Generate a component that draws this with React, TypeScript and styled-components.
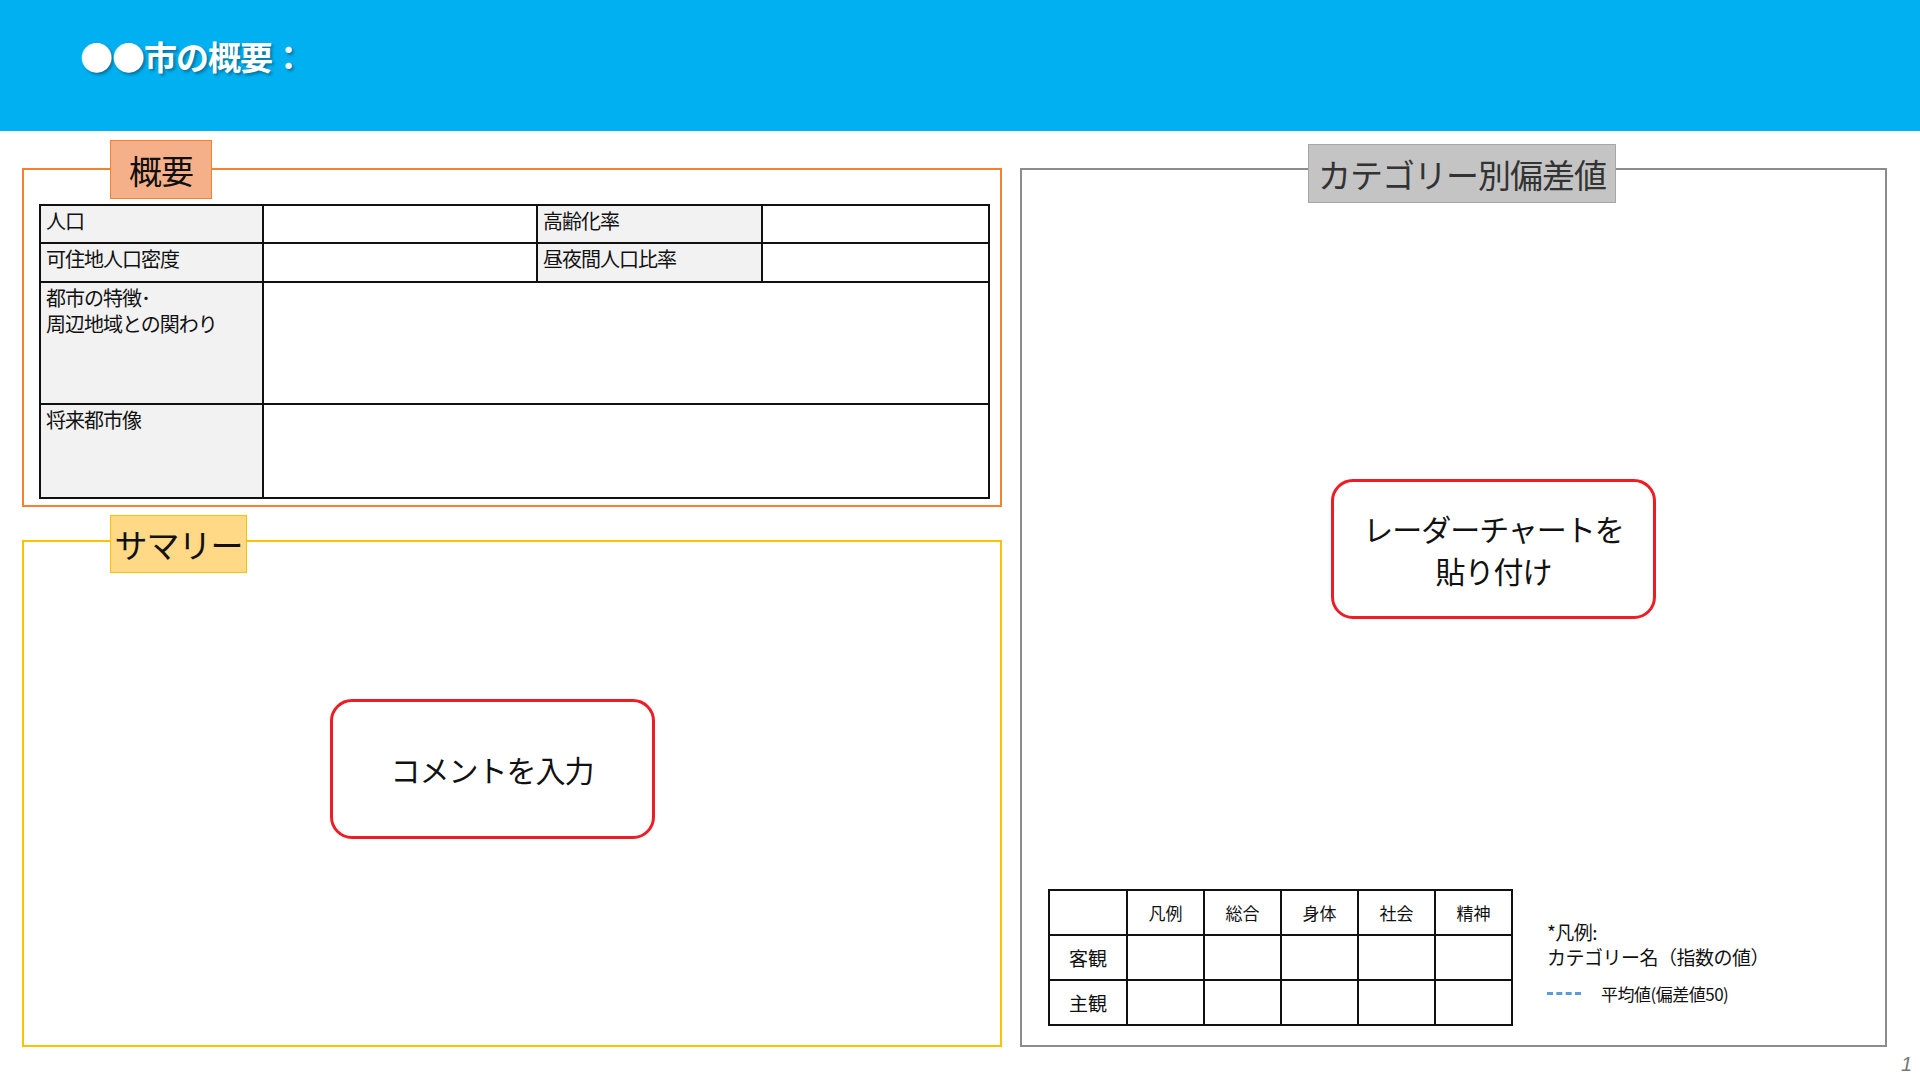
import * as React from 'react';
import styled, { createGlobalStyle } from 'styled-components';

const Global = createGlobalStyle`
  html, body { margin:0; padding:0; background:#fff; }
  body { font-family: "Noto Sans CJK JP", "Noto Sans", sans-serif; color:#111; }
`

const Page = styled.div`
  width:1920px;
  height:1080px;
  position:relative;
  overflow:hidden;
`
const Header = styled.header`
  height:131px;
  background:#00b0f0;
  display:flex;
  align-items:center;
  padding-left:80px;
  box-sizing:border-box;
`
const Title = styled.h1`
  margin:0 0 20px;
  font-size:33px;
  font-weight:700;
  color:#fff;
  letter-spacing:-1px;
  text-shadow: 2px 2px 3px rgba(0,0,0,0.35);
`
const Body = styled.main`
  display:grid;
  grid-template-columns:980px 867px;
  column-gap:18px;
  padding:37px 0 0 22px;
`
const LeftCol = styled.div`
  display:flex;
  flex-direction:column;
  gap:33px;
`
const Frame = styled.section<{ $color: string; $h: number }>`
  position:relative;
  height:${p => p.$h}px;
  border:2px solid ${p => p.$color};
  box-sizing:border-box;
`
const Tag = styled.div<{ $bg: string; $border: string; $left: number; $top: number; $w: number; $h: number; $size: number; $color?: string }>`
  position:absolute;
  left:${p => p.$left}px;
  top:${p => p.$top}px;
  width:${p => p.$w}px;
  height:${p => p.$h}px;
  background:${p => p.$bg};
  border:1px solid ${p => p.$border};
  box-sizing:border-box;
  display:flex;
  align-items:center;
  justify-content:center;
  font-size:${p => p.$size}px;
  color:${p => p.$color || '#111'};
  letter-spacing:-1px;
`
const InfoTable = styled.table`
  position:absolute;
  left:15px;
  top:34px;
  width:951px;
  border-collapse:collapse;
  font-size:20px;
  td { border:2px solid #111; padding:2px 5px; vertical-align:top; line-height:1.3; letter-spacing:-1px; }
`
const Th = styled.td`
  background:#f2f2f2;
`
const Callout = styled.div<{ $w: number; $h: number }>`
  width:${p => p.$w}px;
  height:${p => p.$h}px;
  border:3px solid #ee1c25;
  border-radius:22px;
  box-sizing:border-box;
  display:flex;
  align-items:center;
  justify-content:center;
  text-align:center;
  font-size:30px;
  line-height:1.4;
  background:#fff;
  letter-spacing:-1px;
`
const CenterArea = styled.div<{ $pt: number }>`
  display:flex;
  justify-content:center;
  padding-top:${p => p.$pt}px;
`
const BottomRow = styled.div`
  position:absolute;
  left:26px;
  top:719px;
  display:flex;
  align-items:flex-start;
  gap:34px;
`
const ScoreTable = styled.table`
  border-collapse:collapse;
  font-size:17px;
  td { border:2px solid #111; height:43px; text-align:center; padding:0; }
`
const Legend = styled.div`
  padding-top:30px;
  font-size:19px;
  line-height:25px;
  letter-spacing:-0.5px;
`
const AvgRow = styled.div`
  display:flex;
  align-items:center;
  gap:20px;
  margin-top:12px;
  font-size:17px;
`
const Dash = styled.span`
  width:34px;
  border-top:3px dashed #5b9bd5;
`
const PageNo = styled.div`
  position:absolute;
  right:8px;
  bottom:4px;
  font-size:20px;
  font-style:italic;
  color:#777;
  font-family:"Liberation Sans", sans-serif;
`

const cols = ['凡例', '総合', '身体', '社会', '精神']

export default function App() {
  return (
    <Page>
      <Global />
      <Header><Title>●●市の概要：</Title></Header>
      <Body>
        <LeftCol>
          <Frame $color="#f4812e" $h={339}>
            <Tag $bg="#f5b08a" $border="#f4812e" $left={86} $top={-30} $w={102} $h={59} $size={33}>概要</Tag>
            <InfoTable>
              <colgroup><col style={{ width: 223 }} /><col style={{ width: 274 }} /><col style={{ width: 225 }} /><col /></colgroup>
              <tbody>
                <tr style={{ height: 38 }}><Th>人口</Th><td /><Th>高齢化率</Th><td /></tr>
                <tr style={{ height: 39 }}><Th>可住地人口密度</Th><td /><Th>昼夜間人口比率</Th><td /></tr>
                <tr style={{ height: 122 }}><Th>都市の特徴･<br />周辺地域との関わり</Th><td colSpan={3} /></tr>
                <tr style={{ height: 94 }}><Th>将来都市像</Th><td colSpan={3} /></tr>
              </tbody>
            </InfoTable>
          </Frame>
          <Frame $color="#ffc000" $h={507}>
            <Tag $bg="#ffd986" $border="#ffc000" $left={86} $top={-27} $w={137} $h={58} $size={33}>サマリー</Tag>
            <CenterArea $pt={157}>
              <Callout $w={325} $h={140} style={{ marginLeft: -40 }}>コメントを入力</Callout>
            </CenterArea>
          </Frame>
        </LeftCol>
        <Frame $color="#8c8c8c" $h={879}>
          <Tag $bg="#c4c4c4" $border="#a6a6a6" $left={286} $top={-26} $w={308} $h={59} $size={33} $color="#333">カテゴリー別偏差値</Tag>
          <CenterArea $pt={309}>
            <Callout $w={325} $h={140} style={{ marginLeft: 80 }}>レーダーチャートを<br />貼り付け</Callout>
          </CenterArea>
          <BottomRow>
            <ScoreTable>
              <colgroup><col style={{ width: 78 }} />{cols.map(c => <col key={c} style={{ width: 77 }} />)}</colgroup>
              <tbody>
                <tr><td />{cols.map(c => <td key={c}>{c}</td>)}</tr>
                <tr><td style={{ fontSize: 19 }}>客観</td>{cols.map(c => <td key={c} />)}</tr>
                <tr><td style={{ fontSize: 19 }}>主観</td>{cols.map(c => <td key={c} />)}</tr>
              </tbody>
            </ScoreTable>
            <Legend>
              <div>*凡例:</div>
              <div>カテゴリー名（指数の値）</div>
              <AvgRow><Dash />平均値(偏差値50)</AvgRow>
            </Legend>
          </BottomRow>
        </Frame>
      </Body>
      <PageNo>1</PageNo>
    </Page>
  )
}
